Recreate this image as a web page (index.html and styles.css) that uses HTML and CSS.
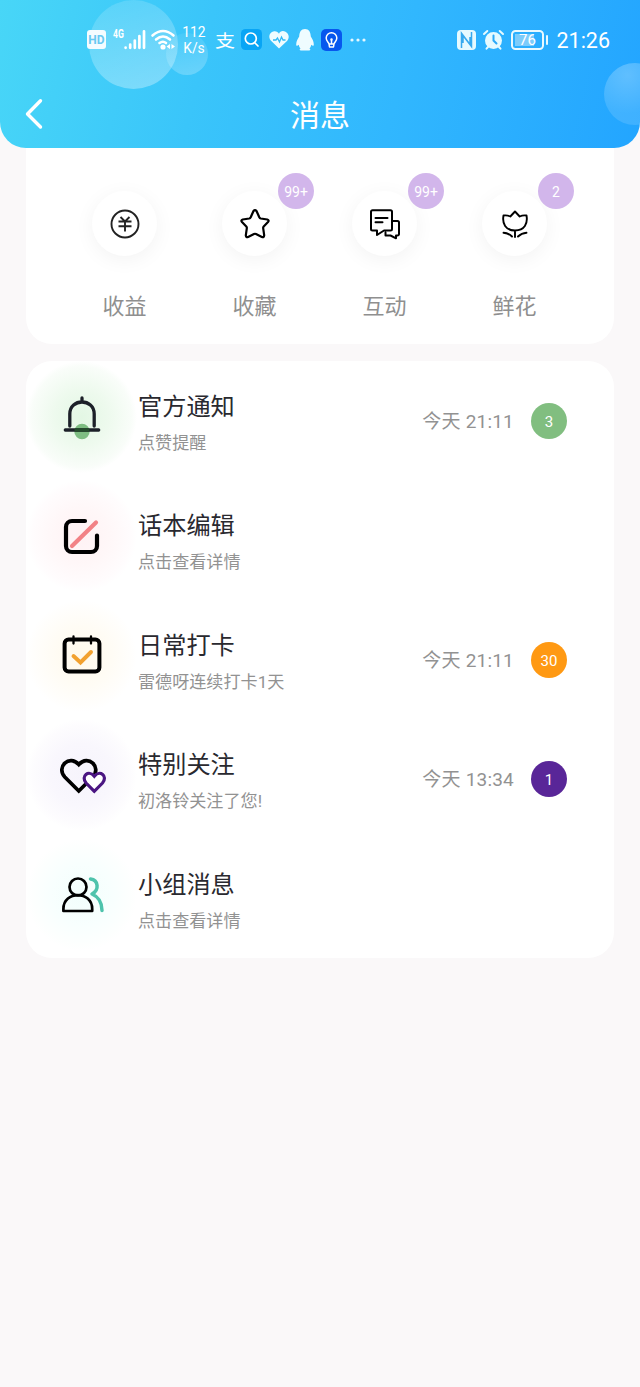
FILE: index.html
```html
<!DOCTYPE html>
<html lang="zh-CN">
<head>
<meta charset="utf-8">
<title>消息</title>
<link rel="stylesheet" href="styles.css">
</head>
<body>
<header class="header">
  <i class="bubble bubble-large"></i><i class="bubble bubble-small"></i><i class="bubble bubble-edge"></i>
  <div class="status">
    <span class="hd">HD</span>
    <span class="net">4G</span>
    <svg class="signal" width="22" height="20" viewBox="0 0 22 20" stroke="#fff" stroke-width="2.700" stroke-linecap="round"><path d="M1.600 17.500v.3M6.200 14.500v3.300M10.800 10.500v7.300M15.400 6v11.800M20 1.300v16.500"/></svg>
    <svg class="wifi" width="25" height="21" viewBox="0 0 25 21" fill="none" stroke="#fff" stroke-width="2.600" stroke-linecap="round"><path d="M1.500 6.500Q12 -2.500 22.500 6.500M5 10.500Q12 4.500 19 10.500M8.500 14Q12 11.500 15 14"/><circle cx="12" cy="18" r="1.300" fill="#fff"/><path d="M19 15v5l-3.500-2.500zM20.500 15v5l3.500-2.500z" fill="#fff" stroke="none"/></svg>
    <span class="speed"><span>112</span><span>K/s</span></span>
    <span class="pay">支</span>
    <svg class="search" width="21" height="21" viewBox="0 0 21 21" fill="none"><rect width="21" height="21" rx="4.500" fill="#08a5f5"/><circle cx="9.800" cy="9.500" r="5.500" stroke="#fff" stroke-width="1.700"/><path d="m14 14 3 3" stroke="#fff" stroke-width="1.700" stroke-linecap="round"/></svg>
    <svg class="health" width="20" height="18" viewBox="0 0 20 18"><path d="M10 17.500 2 9.800C-1 6.500.2 1.500 4.300.5 7-.1 9 1 10 2.700 11-.1 14-.6 16.500.7 20.500 3 20.500 7.500 18 10z" fill="#effcff"/><path d="M4 9h3l1.500-2 2 4 2-5 1.500 3h2.500" fill="none" stroke="#31baf6" stroke-width="1.300"/></svg>
    <svg class="penguin" width="18" height="22" viewBox="0 0 18 22" fill="#effcff"><path d="M9 0C5 0 3.400 3 3.200 7.500 1.500 10 .3 12.500.2 15.500c0 2 1.300 1.500 2.600.2.200 1.700.9 3 1.700 3.800-1.300.8-1.200 2 .5 2h8c1.700 0 1.800-1.200.5-2 .8-.8 1.500-2.100 1.700-3.800 1.300 1.300 2.600 1.800 2.600-.2-.1-3-1.300-5.500-3-8C14.600 3 13 0 9 0z"/></svg>
    <svg class="bulb" width="21" height="22" viewBox="0 0 21 22" fill="none" stroke="#fff" stroke-width="1.500" stroke-linecap="round" stroke-linejoin="round"><rect width="21" height="22" rx="5" fill="#0757ee" stroke="none"/><path d="M8 15C7.700 13 5.200 12.300 5.200 9a5.300 5.300 0 0 1 10.600 0C15.800 12.300 13.300 13 13 15zM8 15l.5 3h4l.5-3M10.500 15v-4"/><circle cx="10.500" cy="10.500" r=".5"/></svg>
    <svg class="more" width="16" height="4" viewBox="0 0 16 4" fill="#e6f8ff"><circle cx="2" cy="2" r="1.600"/><circle cx="8" cy="2" r="1.600"/><circle cx="14" cy="2" r="1.600"/></svg>
    <svg class="nfc" width="19" height="20" viewBox="0 0 19 20"><rect width="19" height="20" rx="4" fill="#e6faff"/><path d="M4.500 18V3.200l8.500 11.300V7M14.500 2v14.500L6 5.500V13" fill="none" stroke="#36a9ee" stroke-width="1.500"/></svg>
    <svg class="alarm" width="21" height="20" viewBox="0 0 21 20" fill="none" stroke="#e6faff" stroke-linecap="round"><circle cx="10.500" cy="10.500" r="8.500" fill="#e6faff" stroke="none"/><path d="M1 4 4.300 1M20 4l-3.300-3" stroke-width="2"/><path d="m5 17-1.500 1.700M16 17l1.500 1.700" stroke-width="2"/><path d="M10.500 5.500v5l3 3" stroke="#2ca9f8" stroke-width="2"/></svg>
    <span class="battery"><span class="charge">76</span></span>
    <span class="clock">21:26</span>
  </div>
  <div class="nav">
    <svg class="back" width="18" height="30" viewBox="0 0 18 30" fill="none" stroke="#fff" stroke-width="3.400" stroke-linecap="round" stroke-linejoin="round"><path d="M15.500 1.800 2.500 15l13 13"/></svg>
    <h1>消息</h1>
  </div>
</header>
<main>
  <nav class="quick">
    <a class="shortcut"><span class="disc"><svg width="30" height="30" viewBox="0 0 30 30" fill="none" stroke="#222" stroke-width="1.900"><circle cx="15" cy="15" r="13.500"/><path d="m10.500 8 4.500 4.500L19.500 8M8.500 12.500h13M8.500 17.300h13M15 12.500V22.500"/></svg></span><span class="label">收益</span></a>
    <a class="shortcut"><span class="disc"><svg width="30" height="30" viewBox="0 0 30 30" fill="none" stroke="#000" stroke-width="2.200" stroke-linejoin="round"><path d="M13.500 2Q15 .2 16.500 2L19.300 8.300Q19.800 9.300 20.800 9.500L27.300 10.500Q29.500 11.200 28 13L23.700 17.500Q23 18.300 23.200 19.300L24.200 26.400Q23.900 28.800 21.900 28L16 25Q15 24.500 14 25L8.100 28Q6.100 28.800 5.800 26.400L6.800 19.300Q7 18.300 6.300 17.500L2 13Q.5 11.200 2.700 10.500L9.200 9.500Q10.200 9.300 10.700 8.300Z"/></svg><b class="badge">99+</b></span><span class="label">收藏</span></a>
    <a class="shortcut"><span class="disc"><svg width="30" height="30" viewBox="0 0 30 30" fill="none" stroke="#000" stroke-width="2" stroke-linejoin="round" stroke-linecap="round"><path d="M2.500 1.300h18a1.500 1.500 0 0 1 1.500 1.500V20a1.500 1.500 0 0 1-1.500 1.500h-6.500L7 26v-4.500H2.500A1.500 1.500 0 0 1 1 20V2.800a1.500 1.500 0 0 1 1.500-1.500zM5.500 9h12M5.500 13.300h7M23 12h4.500a1.500 1.500 0 0 1 1.500 1.500V25a1.500 1.500 0 0 1-1.500 1.500H26v2.800L20.500 26.500h-5v-3"/></svg><b class="badge">99+</b></span><span class="label">互动</span></a>
    <a class="shortcut"><span class="disc"><svg width="30" height="30" viewBox="0 0 30 30" fill="none" stroke="#000" stroke-width="1.900" stroke-linejoin="round" stroke-linecap="round"><path d="M3.500 6.500q3.700-.6 6.800 1L15 2.500 19.700 7.500q3.100-1.600 6.800-1c1.500 8-2 15-11.500 15S2 14.500 3.500 6.500zM15 21.500v6.500"/><path d="M3.500 23.700q5 .3 8.500 3.800M26.500 23.700q-5 .3-8.500 3.800"/></svg><b class="badge">2</b></span><span class="label">鲜花</span></a>
  </nav>
  <section class="list">
    <article class="row">
      <span class="icon icon-green"><svg width="48" height="48" viewBox="0 0 48 48" fill="none" stroke="#1c2028" stroke-width="3.300" stroke-linecap="round"><circle cx="24" cy="38.500" r="7.700" fill="#7ebd82" stroke="none"/><path d="M11.800 33V21C11.800 5 36.200 5 36.200 21v12M24 5v3M7.300 37h33.400"/><path d="M18 37h12" stroke="#234b2b"/></svg></span>
      <div class="text"><h2>官方通知</h2><p>点赞提醒</p></div>
      <time>今天 21:11</time><b class="count count-green">3</b>
    </article>
    <article class="row">
      <span class="icon icon-pink"><svg width="48" height="48" viewBox="0 0 48 48" fill="none" stroke="#000" stroke-width="4.200" stroke-linecap="round"><path d="M27 8H14a6 6 0 0 0-6 6v19a6 6 0 0 0 6 6h19a6 6 0 0 0 6-6V22.500"/><path d="M14 33 38 9.500" stroke="#f28286"/></svg></span>
      <div class="text"><h2>话本编辑</h2><p>点击查看详情</p></div>
    </article>
    <article class="row">
      <span class="icon icon-yellow"><svg width="48" height="48" viewBox="0 0 48 48" fill="none" stroke="#000" stroke-width="4" stroke-linecap="round"><rect x="6.600" y="7.500" width="34.800" height="32" rx="4"/><path d="M15.500 4.500v7M33 4.500v7" stroke-width="2.300"/><path d="m15.500 24 7 6.500L33 20" stroke="#f2a12f" stroke-width="3.900"/></svg></span>
      <div class="text"><h2>日常打卡</h2><p>雷德呀连续打卡1天</p></div>
      <time>今天 21:11</time><b class="count count-orange">30</b>
    </article>
    <article class="row">
      <span class="icon icon-purple"><svg width="48" height="48" viewBox="0 0 48 48" fill="none" stroke="#000" stroke-width="3.700"><path d="M20.800 39 6.800 25C-2.200 15 11.300 2 20.800 12.500 30.300 2 43.800 15 34.800 25z"/><path d="M36.300 39.300 28.100 31C22.300 24 30.800 17.500 36.300 24.300 41.800 17.500 50.300 24 44.500 31z" stroke="#4b1682" stroke-width="3.200" fill="#fff"/></svg></span>
      <div class="text"><h2>特别关注</h2><p>初洛铃关注了您!</p></div>
      <time>今天 13:34</time><b class="count count-purple">1</b>
    </article>
    <article class="row">
      <span class="icon icon-mint"><svg width="48" height="48" viewBox="0 0 48 48" fill="none" stroke="#000" stroke-width="2.700" stroke-linejoin="round" stroke-linecap="round"><circle cx="20" cy="15" r="8.500"/><path d="M5.400 39v-2c0-18.500 28.800-18.500 28.800 0v2z"/><path d="M32.500 7c8 1 9 11 1.500 15 7 3 10 8 10 16.500" stroke="#4ec3ac" stroke-width="3.500"/></svg></span>
      <div class="text"><h2>小组消息</h2><p>点击查看详情</p></div>
    </article>
  </section>
</main>
</body>
</html>
```
FILE: styles.css
```css
* { box-sizing: border-box; }
body { margin: 0; min-height: 1387px; background: #faf8f9; font-family: Roboto, "Noto Sans CJK SC", sans-serif; }
h1, h2, p { margin: 0; font-weight: 400; }
b { font-weight: 400; }
svg { display: block; flex: none; overflow: visible; }

.header { position: relative; overflow: hidden; height: 148px; border-radius: 0 0 26px 26px; background: linear-gradient(103deg, #48d6f7 0%, #3ac5fa 32%, #31b7fe 62%, #23a5ff 100%); color: #fff; }
.bubble { position: absolute; border-radius: 50%; }
.bubble-large { left: 89px; top: 0; width: 89px; height: 89px; background: linear-gradient(165deg, rgba(255,255,255,.12), rgba(255,255,255,.34)); }
.bubble-small { left: 166px; top: 33px; width: 42px; height: 42px; background: linear-gradient(165deg, rgba(255,255,255,.05), rgba(255,255,255,.25)); }
.bubble-edge { left: 604px; top: 63px; width: 62px; height: 62px; background: radial-gradient(circle at 38% 20%, rgba(255,255,255,.27), rgba(255,255,255,.13) 60%); }

.status { position: relative; display: flex; align-items: center; height: 79px; padding-left: 87px; }
.hd { width: 19px; height: 19px; border-radius: 3px; background: #f4fcff; color: #68c9f2; font: 700 12px/20px "Roboto", sans-serif; text-align: center; }
.net { align-self: flex-start; margin: 28px 0 0 7px; width: 11px; font: 700 12px/12px "Roboto", sans-serif; transform: scaleX(.72); transform-origin: left; }
.wifi { margin-left: 5px; }
.speed { display: flex; flex-direction: column; align-items: center; width: 24px; margin-left: 6px; font-size: 13.800px; line-height: 16px; }
.pay { width: 20px; margin-left: 9px; font-size: 20px; line-height: 20px; font-weight: 400; transform: scaleY(.85) translateY(1px); }
.search { margin-left: 5.500px; }
.health { margin-left: 7px; }
.penguin { margin-left: 7px; }
.bulb { margin-left: 7px; }
.more { margin-left: 8.500px; }
.nfc { margin-left: 91px; }
.alarm { margin-left: 7px; }
.battery { position: relative; width: 33px; height: 20px; margin-left: 7px; border: 2px solid #e9f9ff; border-radius: 4.500px; padding: 2px; }
.battery::after { content: ""; position: absolute; right: -6px; top: 3px; width: 2.500px; height: 10px; border-radius: 1px; background: #e9f9ff; }
.charge { display: block; width: 25px; height: 12px; background: linear-gradient(90deg, #7cccfb 78%, transparent 78%); font-size: 15px; line-height: 13px; text-align: center; }
.clock { margin-left: 12.500px; font-size: 21.500px; line-height: 24px; padding-top: 2px; }
.nav { position: relative; display: grid; grid-template-columns: 64px 1fr 64px; align-items: center; height: 70px; }
.back { margin-left: 25px; }
.nav h1 { padding-top: 3px; font-size: 30px; line-height: 40px; text-align: center; }

main { padding: 0 26px; }
.quick { display: grid; grid-template-columns: repeat(4, 130px); height: 195.500px; padding: 43px 0 0 33.500px; border-radius: 0 0 26px 26px; background: #fff; }
.shortcut { display: flex; flex-direction: column; align-items: center; gap: 34px; }
.disc { position: relative; display: flex; align-items: center; justify-content: center; width: 65px; height: 65px; border-radius: 50%; background: #fff; box-shadow: 0 4px 20px rgba(0,0,0,.05); }
.badge { position: absolute; left: 56px; top: -18px; width: 36px; height: 36px; border-radius: 50%; background: #d2b6eb; color: #fff; font-size: 14px; line-height: 38px; text-align: center; }
.label { color: #8f8f8f; font-size: 22px; line-height: 32px; padding-top: 1px; }

.list { margin-top: 17.500px; border-radius: 26px; background: #fff; overflow: hidden; }
.row { display: flex; align-items: flex-start; height: 119.450px; padding-right: 47px; }
.icon { display: flex; align-items: center; justify-content: center; flex: none; width: 111px; height: 112px; border-radius: 50%; }
.icon-green { background: radial-gradient(closest-side, #e3f7e4, #eefaee 50%, #f9fdf9 90%, #fff); }
.icon-pink { background: radial-gradient(closest-side, #fff2f4, #fff7f8 50%, #fffcfd 88%, #fff); }
.icon-yellow { background: radial-gradient(closest-side, #fff9eb, #fffcf5 55%, #fffefc 88%, #fff); }
.icon-purple { background: radial-gradient(closest-side, #f6f4fc, #f9f7fd 55%, #fdfcfe 88%, #fff); }
.icon-mint { background: radial-gradient(closest-side, #f2fefc, #f8fffe 55%, #fdfffe 88%, #fff); }
.icon svg { margin: 2px 0 0 1px; }
.icon-green svg { margin-top: 0; }
.icon-yellow svg { margin-top: 1px; }
.text { flex: 1; margin-left: 1px; padding-top: 29px; }
.text h2 { color: #29292f; font-size: 24.200px; line-height: 34px; }
.text p { margin-top: 7px; color: #929292; font-size: 17.100px; line-height: 24px; }
time { margin-top: 47px; color: #929292; font-size: 19px; line-height: 28px; letter-spacing: .2px; white-space: nowrap; }
.count { flex: none; width: 36px; height: 36px; margin: 42px 0 0 17px; border-radius: 50%; color: #fff; font-size: 15px; line-height: 38px; text-align: center; }
.count-green { background: #81be80; }
.count-orange { background: #ff9913; }
.count-purple { background: #592698; }
```
